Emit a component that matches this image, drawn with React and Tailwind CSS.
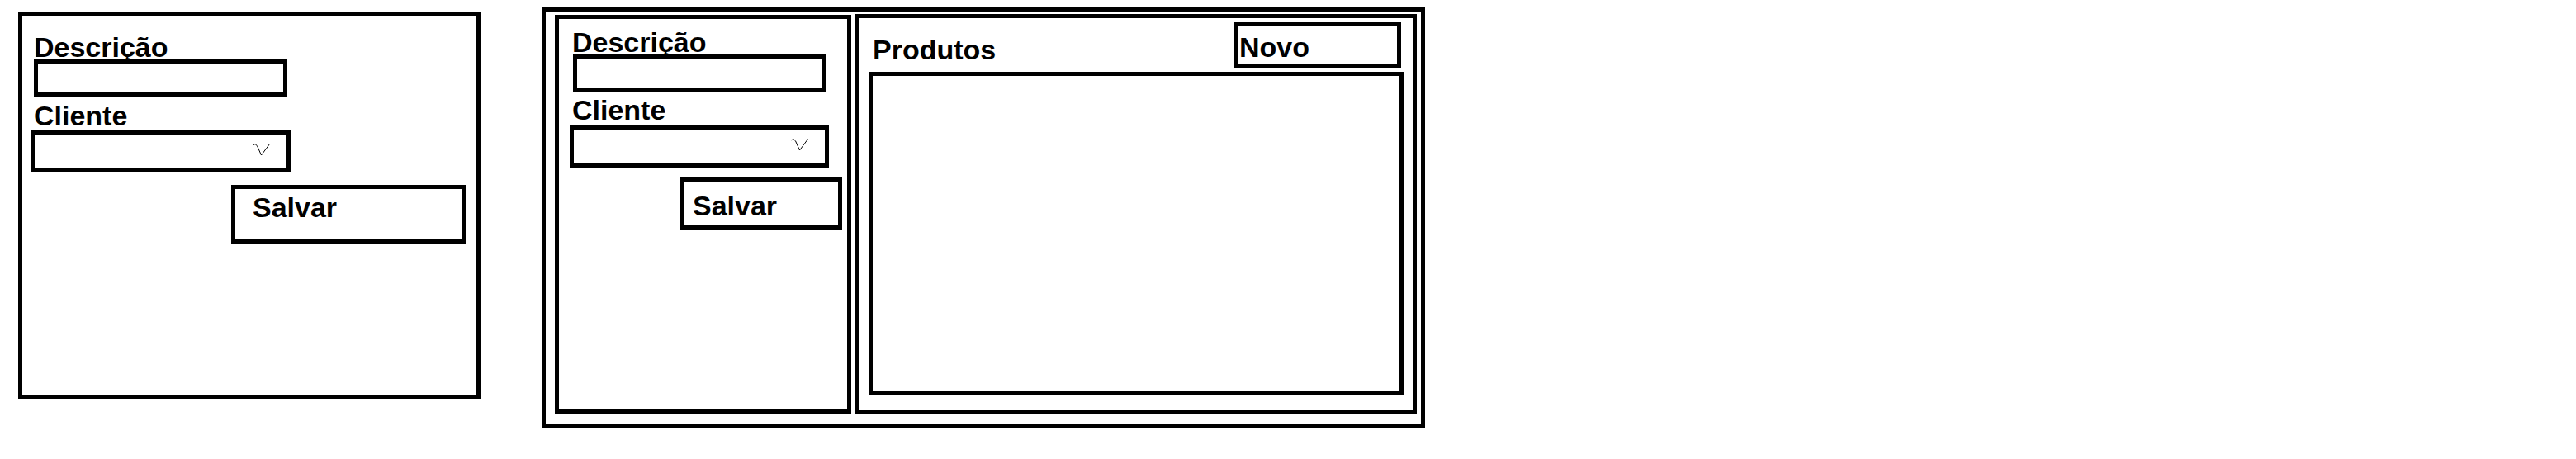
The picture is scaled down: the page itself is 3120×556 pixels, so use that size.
import React from "react";

const Chevron = () => (
  <svg width="21" height="15" viewBox="0 0 21 15" fill="none">
    <path
      d="M0.5 1.8 L3 0.5 L5.5 2.8 L10.5 14 L20.5 0.5"
      stroke="black"
      strokeWidth="1"
    />
  </svg>
);

const Label = ({ children, className }) => (
  <span className={`block text-[34px] leading-[33px] h-[33px] font-bold text-black ${className}`}>
    {children}
  </span>
);

const App = () => {
  return (
    <div className="w-[3120px] h-[556px] bg-white flex items-start font-['Liberation_Sans',Arial,sans-serif]">
      {/* Formulário simples */}
      <div className="mt-[14px] ml-[22px] w-[560px] h-[469px] border-[5px] border-black flex flex-col items-start">
        <Label className="mt-[22px] ml-[14px]">Descrição</Label>
        <div className="-mt-[2px] ml-[14px] w-[307px] h-[45px] border-[5px] border-black" />
        <Label className="mt-[7px] ml-[14px]">Cliente</Label>
        <div className="mt-[1px] ml-[10px] w-[315px] h-[50px] border-[5px] border-black flex justify-end items-start pt-[11px] pr-[20px]">
          <Chevron />
        </div>
        <button className="mt-[16px] ml-[253px] w-[284px] h-[71px] border-[5px] border-black flex items-start pl-[21px] pt-[6px]">
          <Label>Salvar</Label>
        </button>
      </div>

      {/* Formulário com lista de produtos */}
      <div className="mt-[9px] ml-[74px] w-[1070px] h-[509px] border-[5px] border-black flex items-start">
        <div className="mt-[4px] ml-[11px] w-[359px] h-[483px] border-[5px] border-black flex flex-col items-start">
          <Label className="mt-[12px] ml-[16px]">Descrição</Label>
          <div className="-mt-[2px] ml-[17px] w-[307px] h-[45px] border-[5px] border-black" />
          <Label className="mt-[6px] ml-[16px]">Cliente</Label>
          <div className="mt-[2px] ml-[13px] w-[314px] h-[51px] border-[5px] border-black flex justify-end items-start pt-[11px] pr-[20px]">
            <Chevron />
          </div>
          <button className="mt-[12px] ml-[147px] w-[196px] h-[63px] border-[5px] border-black flex items-start pl-[10px] pt-[13px]">
            <Label>Salvar</Label>
          </button>
        </div>

        <div className="mt-[3px] ml-[4px] w-[681px] h-[485px] border-[5px] border-black flex flex-col">
          <div className="flex items-start">
            <Label className="mt-[22px] ml-[17px]">Produtos</Label>
            <button className="ml-auto mr-[14px] mt-[5px] w-[202px] h-[55px] border-[5px] border-black flex items-start pl-[1px] pt-[9px]">
              <Label>Novo</Label>
            </button>
          </div>
          <div className="mt-[5px] ml-[12px] w-[648px] h-[392px] border-[5px] border-black" />
        </div>
      </div>
    </div>
  );
};

export default App;
